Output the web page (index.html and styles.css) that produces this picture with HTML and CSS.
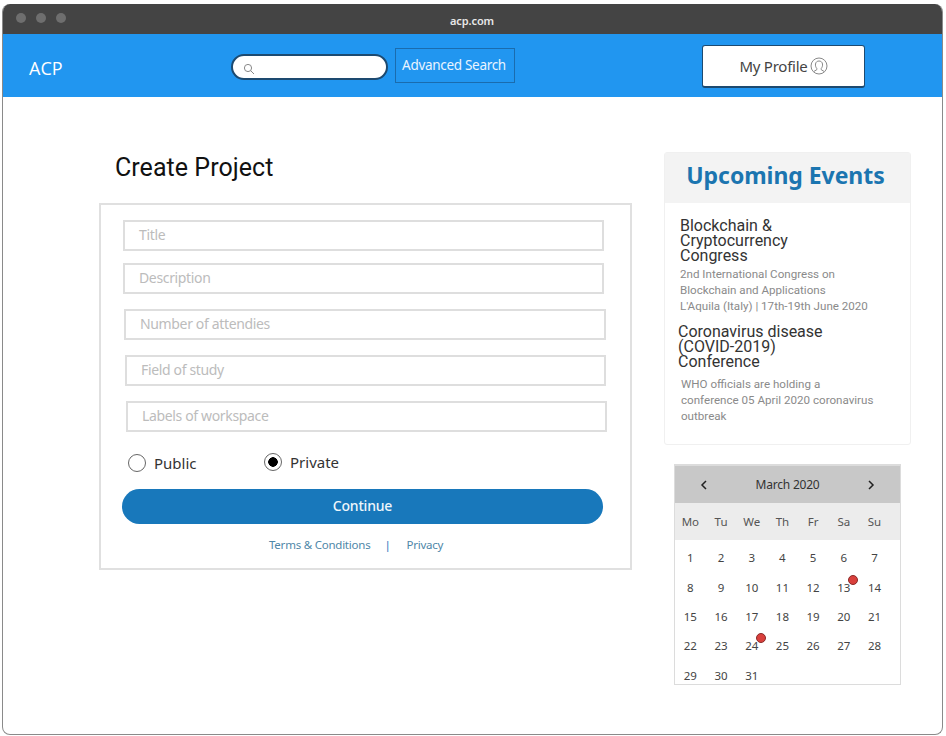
FILE: index.html
```html
<!DOCTYPE html>
<html lang="en">
<head>
<meta charset="utf-8">
<title>acp.com</title>
<link rel="stylesheet" href="styles.css">
</head>
<body>
<div class="window">
  <div class="titlebar">
    <div class="lights"><i></i><i></i><i></i></div>
    <div class="url">acp.com</div>
  </div>
  <header class="nav">
    <div class="logo">ACP</div>
    <div class="search">
      <svg width="12" height="12" viewBox="0 0 12 12" fill="none" stroke="#888" stroke-width="1"><circle cx="5" cy="5" r="3.6"/><path d="M7.7 7.7L11 11"/></svg>
    </div>
    <div class="adv">Advanced Search</div>
    <div class="profile">My Profile
      <svg width="18" height="18" viewBox="0 0 18 18" fill="none" stroke="#888" stroke-width="1"><circle cx="9" cy="9" r="8"/><path d="M6.8 11.5C5.6 10 5.3 8.600 5.500 7 5.800 5 7.200 4 9 4s3.200 1 3.500 3c.2 1.600-.1 3-1.300 4.500v1.200l3 1.800M6.800 11.500v1.200l-3 1.800"/></svg>
    </div>
  </header>
  <main class="content">
    <section class="left">
      <h1>Create Project</h1>
      <form class="card">
        <div class="field f1">Title</div>
        <div class="field f2">Description</div>
        <div class="field f3">Number of attendies</div>
        <div class="field f4">Field of study</div>
        <div class="field f5">Labels of workspace</div>
        <div class="radios">
          <span class="radio pub"><i class="dot"></i>Public</span>
          <span class="radio priv"><i class="dot on"></i>Private</span>
        </div>
        <div class="continue">Continue</div>
        <div class="links"><span>Terms &amp; Conditions</span><span class="sep">|</span><span>Privacy</span></div>
      </form>
    </section>
    <aside class="right">
      <div class="events">
        <h2>Upcoming Events</h2>
        <div class="ev ev1">
          <h3>Blockchain &amp;<br>Cryptocurrency<br>Congress</h3>
          <p>2nd International Congress on<br>Blockchain and Applications<br>L'Aquila (Italy) | 17th-19th June 2020</p>
        </div>
        <div class="ev ev2">
          <h3>Coronavirus disease<br>(COVID-2019)<br>Conference</h3>
          <p>WHO officials are holding a<br>conference 05 April 2020 coronavirus<br>outbreak</p>
        </div>
      </div>
      <div class="cal">
        <div class="cal-head">
          <svg width="8" height="10" viewBox="0 0 8 10" fill="none" stroke="#222" stroke-width="1.500"><path d="M6 1L2 5l4 4"/></svg>
          <span>March 2020</span>
          <svg width="8" height="10" viewBox="0 0 8 10" fill="none" stroke="#222" stroke-width="1.500"><path d="M2 1l4 4-4 4"/></svg>
        </div>
        <div class="cal-week"><span>Mo</span><span>Tu</span><span>We</span><span>Th</span><span>Fr</span><span>Sa</span><span>Su</span></div>
        <div class="cal-days">
          <span>1</span><span>2</span><span>3</span><span>4</span><span>5</span><span>6</span><span>7</span>
          <span>8</span><span>9</span><span>10</span><span>11</span><span>12</span><span class="has">13<i></i></span><span>14</span>
          <span>15</span><span>16</span><span>17</span><span>18</span><span>19</span><span>20</span><span>21</span>
          <span>22</span><span>23</span><span class="has">24<i></i></span><span>25</span><span>26</span><span>27</span><span>28</span>
          <span>29</span><span>30</span><span>31</span>
        </div>
      </div>
    </aside>
  </main>
</div>
</body>
</html>
```
FILE: styles.css
```css
* { box-sizing: border-box; }
html, body { margin: 0; height: 100%; background: #fff; }
body { padding: 4px 3px 1px 2px; font-family: "Noto Sans", sans-serif; overflow: hidden; }
.window { height: 731px; border: 1px solid #8a8a8a; border-top: 0; border-radius: 8px; overflow: hidden; display: flex; flex-direction: column; background: #fff; }
.titlebar { height: 30px; flex: none; background: #444; display: flex; align-items: center; position: relative; padding: 0 0 2px 13px; }
.lights { display: flex; gap: 10px; }
.lights i { width: 10px; height: 10px; border-radius: 50%; background: #6e6e6e; }
.url { position: absolute; left: 447px; top: 10px; color: #e8e8e8; font: 600 11px/14px "Noto Sans", sans-serif; letter-spacing: -.1px; }
.nav { height: 63px; flex: none; background: #2196f0; display: flex; align-items: flex-start; color: #fff; }
.logo { margin: 23px 0 0 26px; width: 202px; font: 18px/22px "Open Sans", sans-serif; }
.search { margin-top: 20px; width: 157px; height: 26px; border-radius: 13px; background: #fff; border: 2px solid #1d4a70; padding: 7px 0 0 10px; display: flex; align-items: flex-start; }
.adv { margin: 14px 0 0 7px; width: 120px; height: 35px; border: 1px solid #1a6cae; font: 13.500px/32px "Noto Sans", sans-serif; text-align: center; letter-spacing: -.3px; color: #e9f4ff; padding-right: 2px; }
.profile { margin: 11px 0 0 187px; width: 163px; height: 43px; background: #fff; border: 1px solid #1d4a70; border-bottom-width: 2px; border-radius: 3px; color: #444; font: 15px/43px "Noto Sans", sans-serif; display: flex; justify-content: center; align-items: center; gap: 2px; letter-spacing: -.25px; }
.content { flex: 1; display: flex; align-items: flex-start; }
.left { margin-left: 96px; width: 533px; padding-top: 55px; }
h1 { margin: 0 0 19px 16px; font: 400 25px/32px Roboto, sans-serif; color: #111; letter-spacing: .05px; }
.card { border: 2px solid #e0e0e0; height: 367px; padding: 15px 22px 0 22px; display: flex; flex-direction: column; align-items: flex-start; }
.field { border: 2px solid #dedede; height: 31px; color: #bcbcbc; font: 14px/25px "Noto Sans", sans-serif; padding-left: 14px; letter-spacing: -.35px; }
.f1 { width: 481px; }
.f2 { width: 481px; margin-top: 12px; }
.f3 { width: 482px; margin: 15px 0 0 1px; }
.f4 { width: 481px; margin: 15px 0 0 2px; }
.f5 { width: 481px; margin: 15px 0 0 3px; }
.radios { display: flex; margin: 19px 0 0 5px; height: 24px; align-items: center; color: #333; font: 15px/20px "Noto Sans", sans-serif; }
.radio { display: flex; align-items: center; gap: 8px; }
.pub { width: 136px; }
.priv { margin-top: -2px; }
.dot { width: 18px; height: 18px; border-radius: 50%; border: 1.500px solid #666; display: block; background: #fff; }
.dot.on { background: radial-gradient(circle, #000 0, #000 4.500px, #fff 5px); }
.continue { margin: 14px 0 0 -1px; width: 481px; height: 35px; border-radius: 18px; background: #1878bb; color: #eef6fb; text-align: center; font: 500 14px/33px "Noto Sans", sans-serif; letter-spacing: -.2px; }
.links { margin-top: 13px; padding-left: 146px; display: flex; color: #4f87a8; font: 11.500px/16px "Noto Sans", sans-serif; letter-spacing: -.23px; }
.sep { margin: 0 16px 0 14px; color: #1878bb; }
.right { margin-left: 33px; width: 246px; padding-top: 55px; }
.events { border: 1px solid #f0f0f0; height: 293px; border-radius: 3px; margin-left: -1px; }
h2 { margin: 0; height: 50px; padding-right: 4px; background: #f3f3f3; color: #1b75b0; text-align: center; font: 700 23px/45px "Noto Sans", sans-serif; letter-spacing: -.05px; }
.ev h3 { margin: 0; font: 400 16px/15px Roboto, sans-serif; color: #333; }
.ev p { margin: 0; font: 11.600px/16px Roboto, sans-serif; color: #8a8a8a; }
.ev1 { padding: 15px 0 0 15px; }
.ev1 h3 { margin-bottom: 3px; }
.ev2 { padding: 10px 0 0 13px; }
.ev2 h3 { margin-bottom: 7px; }
.ev2 p { margin-left: 3px; }
.cal { margin: 19px 0 0 9px; width: 227px; height: 221px; border: 1px solid #dcdcdc; border-top-width: 2px; }
.cal-head { height: 37px; background: #c8c8c8; display: flex; align-items: center; justify-content: space-between; padding: 0 25px; color: #333; font: 12px/16px "Noto Sans", sans-serif; letter-spacing: -.2px; }
.cal-week { height: 37px; background: #ececec; display: grid; grid-template-columns: repeat(7, 30.700px); align-items: center; justify-items: center; font: 11.500px/16px "Noto Sans", sans-serif; color: #555; }
.cal-days { padding-top: 3.500px; display: grid; grid-template-columns: repeat(7, 30.700px); grid-auto-rows: 29.400px; align-items: center; justify-items: center; font: 11.500px/16px "Noto Sans", sans-serif; color: #444; }
.has { position: relative; }
.has i { position: absolute; left: 11px; top: -5px; width: 10px; height: 10px; border-radius: 50%; background: #d9403c; border: 1px solid #8a2a28; }
```
